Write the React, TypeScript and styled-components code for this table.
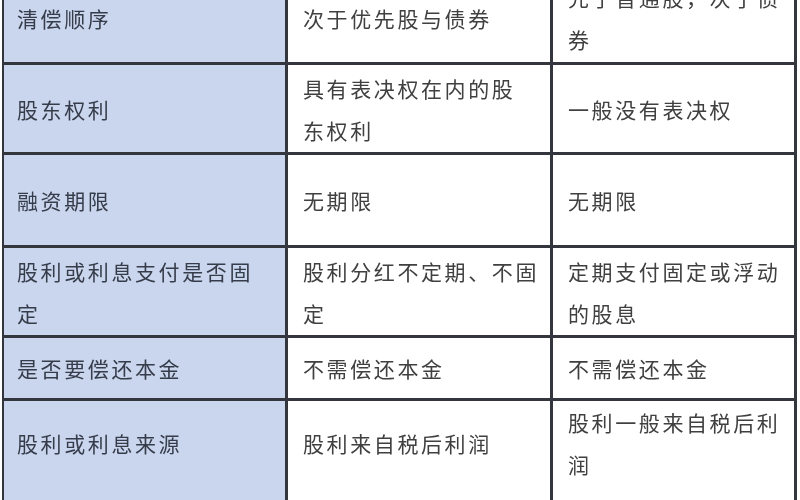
import * as React from 'react';
import styled, { createGlobalStyle } from 'styled-components';

const GlobalStyle = createGlobalStyle`
  html, body {
    margin: 0;
    padding: 0;
    background: #ffffff;
    overflow: hidden;
  }
  body {
    font-family: "Noto Sans CJK SC", "Liberation Serif", serif;
  }
`;

const Page = styled.div`
  width: 800px;
  height: 500px;
  overflow: hidden;
  padding-left: 2px;
  box-sizing: border-box;
`;

const Table = styled.div`
  width: 795px;
  margin-top: -27px;
  display: flex;
  flex-direction: column;
  gap: 3px;
  background: #33363d;
  border-left: 2px solid #33363d;
  border-right: 3px solid #33363d;
  box-sizing: border-box;
  filter: blur(0.45px);
`;

const Row = styled.div<{ $h: number }>`
  display: grid;
  grid-template-columns: 281px 262px 241px;
  gap: 3px;
  height: ${(p) => p.$h}px;
`;

const Cell = styled.div<{ $head?: boolean }>`
  background: ${(p) => (p.$head ? '#c9d6ee' : '#ffffff')};
  color: ${(p) => (p.$head ? '#363c4a' : '#404040')};
  padding-left: ${(p) => (p.$head ? 13 : 15)}px;
  display: flex;
  flex-direction: column;
  justify-content: center;
  font-size: 21px;
  letter-spacing: 2.6px;
  line-height: 42px;
`;

const Line = styled.span`
  white-space: nowrap;
`;

type RowData = { h: number; cells: string[][] };

const rows: RowData[] = [
  { h: 89, cells: [['清偿顺序'], ['次于优先股与债券'], ['先于普通股，次于债', '券']] },
  { h: 87, cells: [['股东权利'], ['具有表决权在内的股', '东权利'], ['一般没有表决权']] },
  { h: 90, cells: [['融资期限'], ['无期限'], ['无期限']] },
  { h: 87, cells: [['股利或利息支付是否固', '定'], ['股利分红不定期、不固', '定'], ['定期支付固定或浮动', '的股息']] },
  { h: 60, cells: [['是否要偿还本金'], ['不需偿还本金'], ['不需偿还本金']] },
  { h: 80, cells: [['股利或利息来源'], ['股利来自税后利润'], ['股利一般来自税后利', '润']] },
  { h: 60, cells: [[''], [''], ['']] },
];

export default function App() {
  return (
    <>
      <GlobalStyle />
      <Page>
        <Table>
          {rows.map((r, i) => (
            <Row key={i} $h={r.h}>
              {r.cells.map((lines, j) => (
                <Cell key={j} $head={j === 0}>
                  {lines.map((t, k) => (
                    <Line key={k}>{t}</Line>
                  ))}
                </Cell>
              ))}
            </Row>
          ))}
        </Table>
      </Page>
    </>
  );
}
